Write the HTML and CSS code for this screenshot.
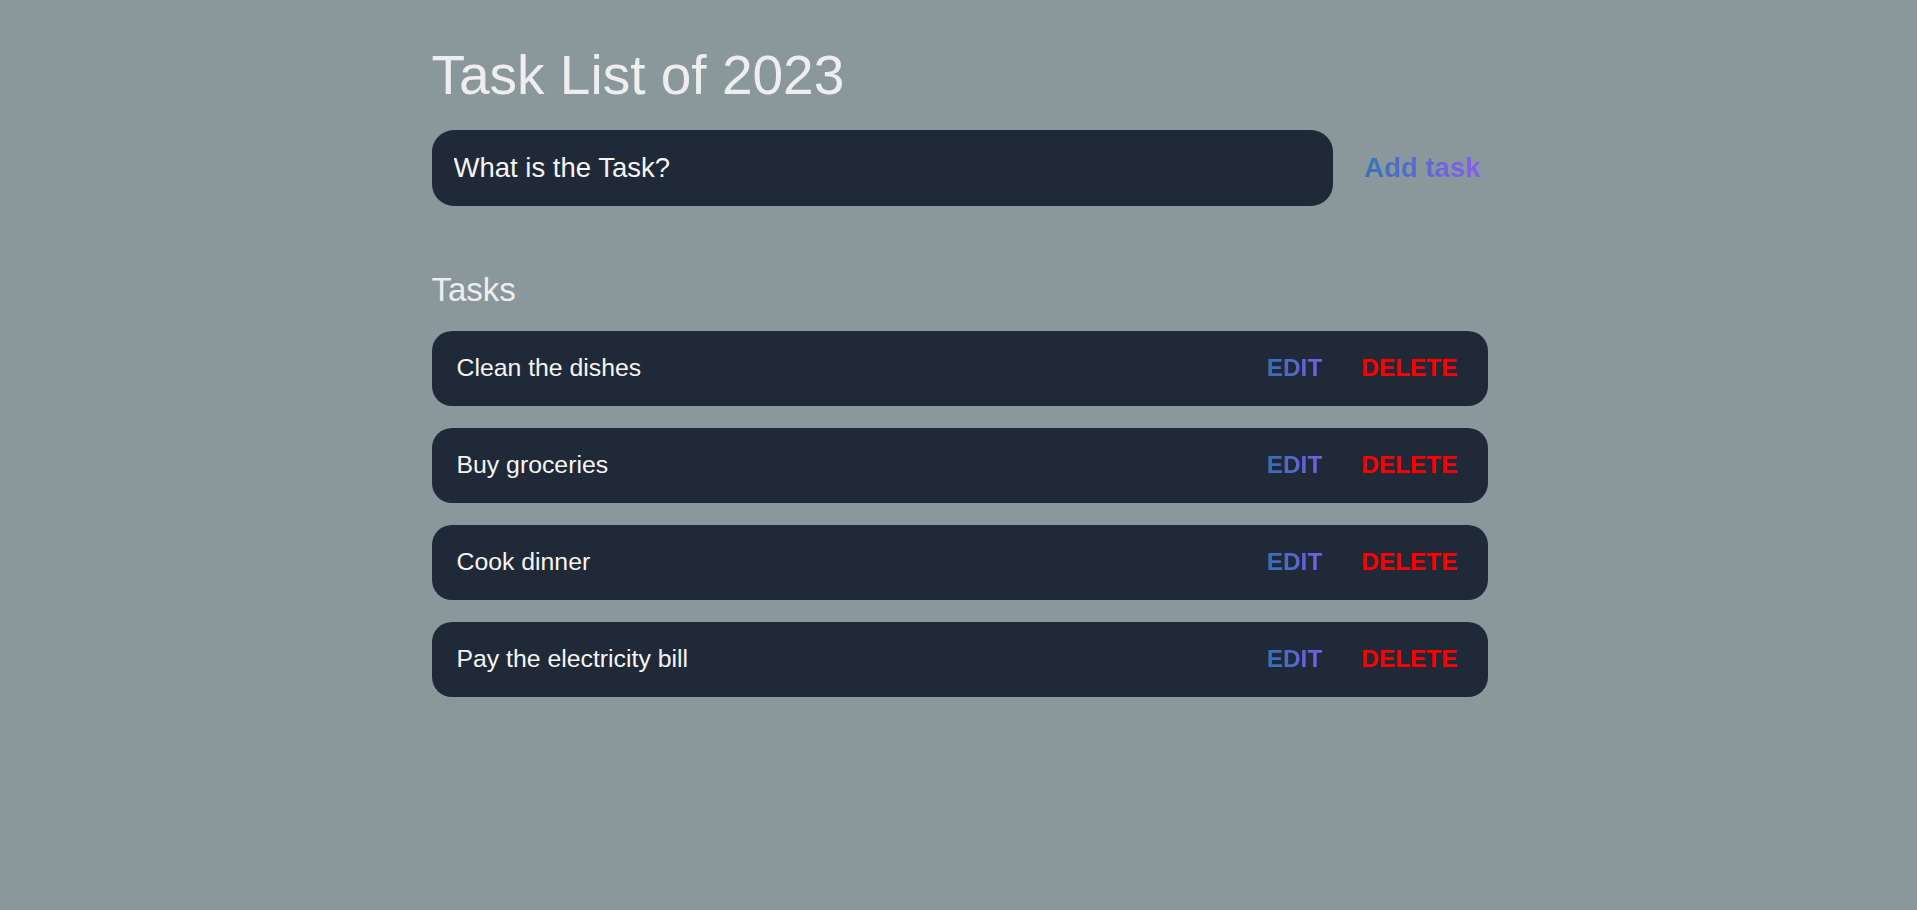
FILE: index.html
```html
<!DOCTYPE html>
<html lang="en">
<head>
<meta charset="utf-8">
<title>Task List of 2023</title>
<link rel="stylesheet" href="styles.css">
</head>
<body>
<main class="app">
  <h1 class="title">Task List of 2023</h1>
  <form class="new-task">
    <input class="new-task-input" type="text" value="What is the Task?">
    <button class="add-btn" type="button">Add task</button>
  </form>
  <section class="tasks">
    <h2 class="tasks-heading">Tasks</h2>
    <div class="task-list">
      <div class="task">
        <span class="task-text">Clean the dishes</span>
        <div class="actions"><button class="edit" type="button">EDIT</button><button class="delete" type="button">DELETE</button></div>
      </div>
      <div class="task">
        <span class="task-text">Buy groceries</span>
        <div class="actions"><button class="edit" type="button">EDIT</button><button class="delete" type="button">DELETE</button></div>
      </div>
      <div class="task">
        <span class="task-text">Cook dinner</span>
        <div class="actions"><button class="edit" type="button">EDIT</button><button class="delete" type="button">DELETE</button></div>
      </div>
      <div class="task">
        <span class="task-text">Pay the electricity bill</span>
        <div class="actions"><button class="edit" type="button">EDIT</button><button class="delete" type="button">DELETE</button></div>
      </div>
    </div>
  </section>
</main>
</body>
</html>
```

FILE: styles.css
```css
* { box-sizing: border-box; }

html, body {
  margin: 0;
  padding: 0;
}

body {
  background: #8a979b;
  color: #eeeeee;
  font-family: "Liberation Sans", Arial, sans-serif;
  min-height: 910px;
}

.app {
  width: 1056px;
  margin: 0 auto;
  padding-top: 43px;
  transform: translateX(1px);
}

.title {
  margin: 0;
  font-size: 55px;
  font-weight: 400;
  color: #eeeeee;
  line-height: 64px;
}

.new-task {
  display: flex;
  align-items: center;
  margin-top: 23px;
}

.new-task-input {
  flex: 1;
  height: 76px;
  border: none;
  outline: none;
  border-radius: 22px;
  background: #1f2937;
  color: #f5f5f5;
  font-family: inherit;
  font-size: 27.5px;
  padding: 0 22px;
}

.add-btn {
  margin-left: 31px;
  padding: 0 7px 0 0;
  border: none;
  background: linear-gradient(to right, #3474b6, #8b5cf6);
  -webkit-background-clip: text;
  background-clip: text;
  color: transparent;
  font-family: inherit;
  font-size: 27.5px;
  font-weight: 700;
  cursor: pointer;
}

.tasks {
  margin-top: 64px;
}

.tasks-heading {
  margin: 0;
  font-size: 33px;
  font-weight: 400;
  line-height: 39px;
  color: #eeeeee;
}

.task-list {
  display: flex;
  flex-direction: column;
  gap: 22.5px;
  margin-top: 22px;
}

.task {
  display: flex;
  align-items: center;
  justify-content: space-between;
  height: 74.5px;
  padding: 0 30px 0 25px;
  background: #1f2937;
  border-radius: 20px;
}

.task-text {
  font-size: 24.8px;
  color: #f5f5f5;
  margin-top: -1px;
}

.actions {
  display: flex;
  align-items: center;
  gap: 39px;
  margin-top: -1px;
}

.actions button {
  border: none;
  padding: 0;
  font-family: inherit;
  font-size: 24.4px;
  font-weight: 700;
  cursor: pointer;
}

.edit {
  background: linear-gradient(to right, #3670b6, #7a5ce4);
  -webkit-background-clip: text;
  background-clip: text;
  color: transparent;
}

.delete {
  background: none;
  color: #ff0000;
}
```
